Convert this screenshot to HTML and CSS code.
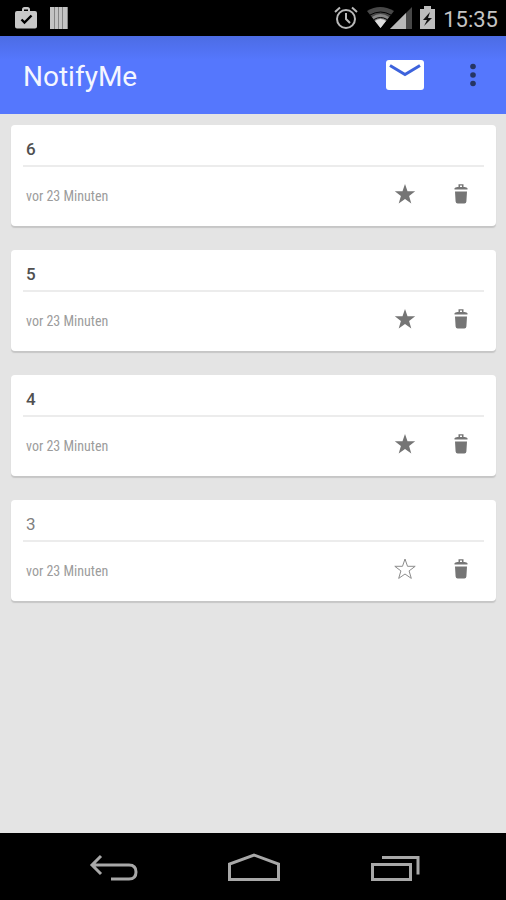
FILE: index.html
```html
<!DOCTYPE html>
<html lang="de">
<head>
<meta charset="utf-8">
<meta name="viewport" content="width=device-width, initial-scale=1">
<title>NotifyMe</title>
<link rel="stylesheet" href="styles.css">
</head>
<body>
<svg class="symbols" aria-hidden="true">
  <symbol id="star" viewBox="0 0 22 22"><path d="M11 1l2.500 7.300h7.700l-6.100 4.600 2.200 7.500L11 16l-6.300 4.400 2.200-7.500L.8 8.300h7.700z"/></symbol>
  <symbol id="trash" viewBox="0 0 22 22"><path d="M4.500 6.500V5.300Q5 4.200 7.500 4h1V1.200h5V4h1q2.500.2 3 1.300v1.200zM10 2.500V4h2V2.500zM5 8.500h12l-.6 10q-.2 2-2 2H7.600q-1.800 0-2-2z"/></symbol>
</svg>
<div class="screen">
  <div class="status">
    <svg width="24" height="24" viewBox="0 0 24 24"><path fill="#c8c8c8" d="M3 5h5V3.500Q8 1 10.500 1h3Q16 1 16 3.500V5h5q2 0 2 2v13.500q0 2-2 2H3q-2 0-2-2V7q0-2 2-2zm7 0h4V3.500h-4z"/><path d="M7.500 13.500l3 3 7-7" fill="none" stroke="#000" stroke-width="2.400"/></svg>
    <svg class="bars" width="20" height="24" viewBox="0 0 20 24"><path fill="#858585" d="M1 1h18v22H1z"/><path fill="#c4c4c4" d="M1 1h4v22H1zM6 1h3v22H6zM10 1h3v22h-3zM14 1h4v22h-4z"/></svg>
    <div class="status-right">
      <svg width="26" height="24" viewBox="0 0 26 24" fill="none" stroke="#b9b9b9" stroke-width="2"><circle cx="13" cy="13" r="9"/><path d="M13 7v6l4 4M2 6l5-4.500M24 6l-5-4.500"/></svg>
      <svg class="radio" width="48" height="24" viewBox="0 0 48 24"><path fill="#484848" d="M1 5Q14-3 28 5L14.500 22z"/><path fill="#858585" d="M6 11q8.500-6 17 0l-8.500 11z"/><path fill="#ddd" d="M9 15q5.500-4 11 0l-5.500 7z"/><path d="M4 9q10.500-6 21 0M8 13.500q6.500-4 13 0" fill="none" stroke="#000"/><path fill="#484848" d="M46 1v22H24z"/><path fill="#b9b9b9" d="M40 7v16H24z"/></svg>
      <svg width="18" height="24" viewBox="0 0 18 24"><path fill="#bdbdbd" d="M1 3h4V0h7v3h4v20H1z"/><path fill="#111" d="M11 6l-7 8h4l-3 6 8-8H9z"/></svg>
      <time>15:35</time>
    </div>
  </div>
  <header class="appbar">
    <h1>NotifyMe</h1>
    <button class="mail" aria-label="Nachricht"><svg width="40" height="34" viewBox="0 0 40 34"><rect x="1" y="2" width="38" height="30" rx="3" fill="#fff"/><path d="M5 7.500l15 9 15-9" fill="none" stroke="#3d63dc" stroke-width="3"/></svg></button>
    <button class="more" aria-label="Mehr"><svg width="8" height="24" viewBox="0 0 8 24" fill="#263563"><circle cx="4" cy="3.500" r="2.800"/><circle cx="4" cy="12" r="2.800"/><circle cx="4" cy="20.500" r="2.800"/></svg></button>
  </header>
  <main class="list">
    <article class="card">
      <h2>6</h2>
      <div class="meta"><p>vor 23 Minuten</p><button aria-label="Favorit"><svg class="icon"><use href="#star"/></svg></button><button aria-label="Löschen"><svg class="icon"><use href="#trash"/></svg></button></div>
    </article>
    <article class="card">
      <h2>5</h2>
      <div class="meta"><p>vor 23 Minuten</p><button aria-label="Favorit"><svg class="icon"><use href="#star"/></svg></button><button aria-label="Löschen"><svg class="icon"><use href="#trash"/></svg></button></div>
    </article>
    <article class="card">
      <h2>4</h2>
      <div class="meta"><p>vor 23 Minuten</p><button aria-label="Favorit"><svg class="icon"><use href="#star"/></svg></button><button aria-label="Löschen"><svg class="icon"><use href="#trash"/></svg></button></div>
    </article>
    <article class="card read">
      <h2>3</h2>
      <div class="meta"><p>vor 23 Minuten</p><button aria-label="Favorit"><svg class="icon outline"><use href="#star"/></svg></button><button aria-label="Löschen"><svg class="icon"><use href="#trash"/></svg></button></div>
    </article>
  </main>
  <nav class="nav">
    <button aria-label="Zurück"><svg width="52" height="30" viewBox="0 0 52 30"><path d="M14 3L5 12l9 9M5 12h37q7 0 7 7t-7 7H24"/></svg></button>
    <button aria-label="Start"><svg width="56" height="30" viewBox="0 0 56 30"><path d="M3.500 26.500V11L28 2l24.500 9v15.500z"/></svg></button>
    <button aria-label="Letzte Apps"><svg width="52" height="30" viewBox="0 0 52 30"><path d="M3.500 11.500h38v15h-38zM13 4.500h36v17"/></svg></button>
  </nav>
</div>
</body>
</html>
```

FILE: styles.css
```css
* { box-sizing: border-box; }

body {
  margin: 0;
  font-family: Roboto, "Liberation Sans", sans-serif;
  background: #e4e4e4;
}

h1, h2, p { margin: 0; }

button {
  display: flex;
  align-items: center;
  justify-content: center;
  padding: 0;
  border: 0;
  background: none;
  cursor: pointer;
}

svg { display: block; flex: none; }

.symbols { position: absolute; width: 0; height: 0; }

.screen {
  display: flex;
  flex-direction: column;
  min-height: 100vh;
}

.status {
  display: flex;
  align-items: center;
  height: 36px;
  padding: 0 8px 0 14px;
  background: #000;
}

.bars { margin-left: 11px; }

.status-right {
  display: flex;
  align-items: center;
  margin-left: auto;
}

.radio { margin: 0 5px 0 7px; }

time {
  padding-top: 3px;
  margin-left: 6px;
  font-size: 22px;
  line-height: 33px;
  color: #c4c4c4;
}

.appbar {
  display: flex;
  align-items: center;
  height: 78px;
  padding: 0 9px 0 23px;
  background: linear-gradient(#4c6ce4, #5577fd 24px);
}

.appbar h1 {
  flex: 1;
  padding-top: 2px;
  font-size: 28px;
  font-weight: 400;
  color: #f4f6ff;
}

.mail { width: 88px; height: 78px; }
.more { width: 48px; height: 78px; }

.list {
  display: flex;
  flex: 1;
  flex-direction: column;
  gap: 24px;
  padding: 11px 10px 24px 11px;
}

.card {
  border-radius: 4px;
  background: #fff;
  box-shadow: 0 2px 1px #c6c6c6;
}

.card h2 {
  margin: 0 12px;
  padding: 4px 3px 0;
  border-bottom: 2px solid #ececec;
  font-size: 17px;
  line-height: 40px;
  height: 42px;
  font-weight: 500;
  color: #505050;
}

.read h2 { font-weight: 400; color: #808080; }

.meta {
  display: flex;
  height: 59px;
  padding: 0 7px 0 15px;
}

.meta p {
  flex: 1;
  padding-top: 1px;
  font-family: "Roboto Condensed", Roboto, "Liberation Sans", sans-serif;
  font-size: 14px;
  line-height: 56px;
  color: #9c9c9c;
}

.meta button { width: 56px; height: 54px; }

.icon { width: 22px; height: 22px; fill: #757575; }

.outline { fill: none; stroke: #8c8c8c; stroke-width: 1; }

.nav {
  display: flex;
  align-items: center;
  justify-content: center;
  height: 67px;
  padding: 3px 0 0 2px;
  background: #000;
}

.nav button { width: 28%; height: 64px; }

.nav path { fill: none; stroke: #a8a8a8; stroke-width: 3; }
```
